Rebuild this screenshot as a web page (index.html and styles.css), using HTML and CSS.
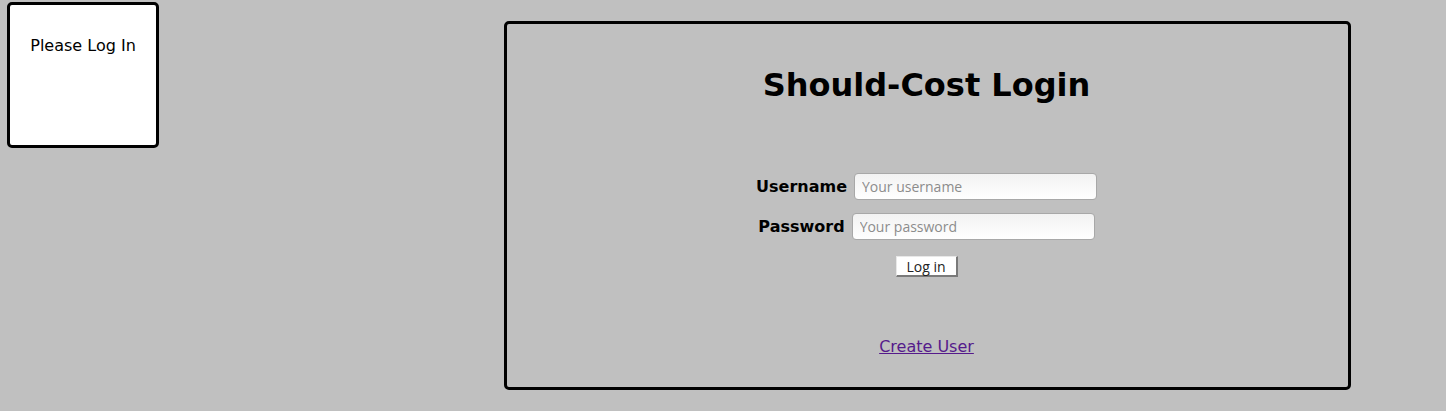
FILE: index.html
```html
<!DOCTYPE html>
<html>
<head>
<meta charset="utf-8">
<link rel="stylesheet" href="styles.css">
</head>
<body>
<div class="page">
  <div class="status">Please Log In</div>
  <div class="login">
    <h1 class="title">Should-Cost Login</h1>
    <form class="form">
      <div class="row">
        <label class="label" for="u">Username</label>
        <input class="field" id="u" type="text" placeholder="Your username">
      </div>
      <div class="row row-pw">
        <label class="label" for="p">Password</label>
        <input class="field" id="p" type="password" placeholder="Your password">
      </div>
      <div class="actions">
        <button class="btn" type="button">Log in</button>
      </div>
    </form>
    <a class="create" href="#">Create User</a>
  </div>
</div>
</body>
</html>
```
FILE: styles.css
```css
html, body {
  margin: 0;
  background: #c0c0c0;
  font-family: "DejaVu Sans", sans-serif;
  color: #000;
}
.page {
  display: flex;
  align-items: flex-start;
  padding: 2px 0 0 7px;
  height: 411px;
  box-sizing: border-box;
}
.status {
  width: 152px;
  height: 146px;
  background: #fff;
  border: 3px solid #000;
  border-radius: 5px;
  font-size: 16px;
  text-align: center;
  padding-top: 31px;
  box-sizing: border-box;
}
.login {
  margin-left: 345px;
  margin-top: 19px;
  width: 847px;
  height: 369px;
  box-sizing: border-box;
  border: 3px solid #000;
  border-radius: 5px;
  padding-right: 2px;
  display: flex;
  flex-direction: column;
  align-items: center;
}
.title {
  margin: 42px 0 0;
  font-size: 32px;
  font-weight: bold;
  line-height: 38px;
}
.form {
  margin-top: 69px;
  display: flex;
  flex-direction: column;
  align-items: center;
}
.row {
  display: flex;
  align-items: center;
  gap: 7px;
  height: 27px;
  margin-bottom: 13px;
}
.label {
  font-size: 16px;
  font-weight: bold;
}
.field {
  width: 243px;
  height: 27px;
  box-sizing: border-box;
  border: 1px solid #a8a8a8;
  border-radius: 4px;
  background: linear-gradient(#f2f2f2, #ffffff);
  font-family: "Open Sans", sans-serif;
  font-size: 14px;
  padding: 0 7px;
  margin: 0;
}
.field::placeholder {
  color: #8c8c8c;
}
.actions {
  margin-top: 3px;
  margin-bottom: 1px;
}
.btn {
  background: #fff;
  border: none;
  border-right: 2px solid #7a7a7a;
  border-bottom: 2px solid #7a7a7a;
  border-top: 1px solid #e8e8e8;
  border-left: 1px solid #e8e8e8;
  font-family: "Open Sans", sans-serif;
  font-size: 14px;
  padding: 0 8px;
  height: 21px;
  width: 62px;
  line-height: 17px;
  color: #222;
}
.create {
  margin-top: 59px;
  font-size: 16px;
  color: #551a8b;
}
```
